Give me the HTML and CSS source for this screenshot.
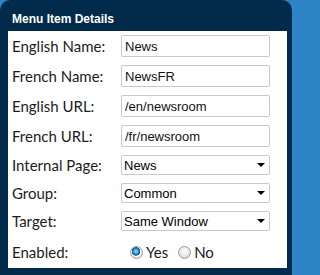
FILE: index.html
```html
<!DOCTYPE html>
<html>
<head>
<meta charset="utf-8">
<link rel="stylesheet" href="styles.css">
</head>
<body>
<div class="panel">
  <div class="panel-title">Menu Item Details</div>
  <div class="panel-body">
    <form class="form">
      <label class="lbl">English Name:</label>
      <input class="txt" type="text" value="News">
      <label class="lbl">French Name:</label>
      <input class="txt" type="text" value="NewsFR">
      <label class="lbl">English URL:</label>
      <input class="txt" type="text" value="/en/newsroom">
      <label class="lbl">French URL:</label>
      <input class="txt" type="text" value="/fr/newsroom">
      <label class="lbl">Internal Page:</label>
      <span class="sel-wrap"><select class="sel"><option>News</option></select></span>
      <label class="lbl">Group:</label>
      <span class="sel-wrap"><select class="sel"><option>Common</option></select></span>
      <label class="lbl">Target:</label>
      <span class="sel-wrap"><select class="sel"><option>Same Window</option></select></span>
      <label class="lbl">Enabled:</label>
      <div class="radios">
        <label class="opt"><input class="radio" type="radio" name="en" checked><span>Yes</span></label>
        <label class="opt"><input class="radio" type="radio" name="en"><span>No</span></label>
      </div>
    </form>
  </div>
</div>
</body>
</html>
```
FILE: styles.css
```css
html, body {
  margin: 0;
  padding: 0;
  background: #2d84c6;
  overflow: hidden;
}
.panel {
  width: 292px;
  height: 275px;
  box-sizing: border-box;
  background: #022a4a;
  border-radius: 10px 10px 0 0;
  padding: 0 5px 0 8px;
}
.panel-title {
  height: 31px;
  box-sizing: border-box;
  padding: 13px 0 0 4px;
  font: bold 12px/13px "Liberation Sans", Arial, sans-serif;
  color: #ffffff;
}
.panel-body {
  background: #ffffff;
  height: 237px;
  box-sizing: border-box;
  padding: 4px 17px 0 4px;
}
.form {
  margin: 0;
  display: grid;
  grid-template-columns: 109px 149px;
  row-gap: 8px;
  align-items: center;
}
.lbl {
  font: 15px/18px Lato, "Liberation Sans", sans-serif;
  color: #1c1c1c;
}
.txt {
  box-sizing: border-box;
  height: 22px;
  width: 149px;
  margin: 0;
  border: 1px solid #c9c9c9;
  border-radius: 2px;
  padding: 0 3px;
  font: 13px "Liberation Sans", Arial, sans-serif;
  color: #111;
  background: #fff;
  outline: none;
}
.sel-wrap {
  position: relative;
  display: block;
  height: 20px;
}
.sel-wrap::after {
  content: "";
  position: absolute;
  right: 5px;
  top: 8px;
  border-left: 4px solid transparent;
  border-right: 4px solid transparent;
  border-top: 4px solid #000;
  pointer-events: none;
}
.sel {
  -webkit-appearance: none;
  appearance: none;
  box-sizing: border-box;
  display: block;
  height: 20px;
  width: 149px;
  margin: 0;
  border: 1px solid #c9c9c9;
  border-radius: 2px;
  padding: 0 2px;
  font: 13px "Liberation Sans", Arial, sans-serif;
  color: #000;
  background: #fff;
  outline: none;
}
.radios {
  display: flex;
  align-items: center;
  gap: 10px;
  height: 26px;
  margin-left: 9px;
}
.opt {
  display: flex;
  align-items: center;
  gap: 3px;
  font: 15px/18px Lato, "Liberation Sans", sans-serif;
  color: #1c1c1c;
}
.radio {
  -webkit-appearance: none;
  appearance: none;
  margin: 0;
  width: 13px;
  height: 13px;
  border-radius: 50%;
  border: 1px solid #9a9a9a;
  background: radial-gradient(circle at 50% 40%, #ffffff 0%, #e9e9e9 50%, #c8c8c8 100%);
  box-sizing: border-box;
}
.radio:checked {
  background: radial-gradient(circle at 45% 40%, #a9dcf8 0%, #2f8fd0 30%, #0d4f8c 45%, #ffffff 50%, #e6e6e6 75%, #c8c8c8 100%);
}
```
